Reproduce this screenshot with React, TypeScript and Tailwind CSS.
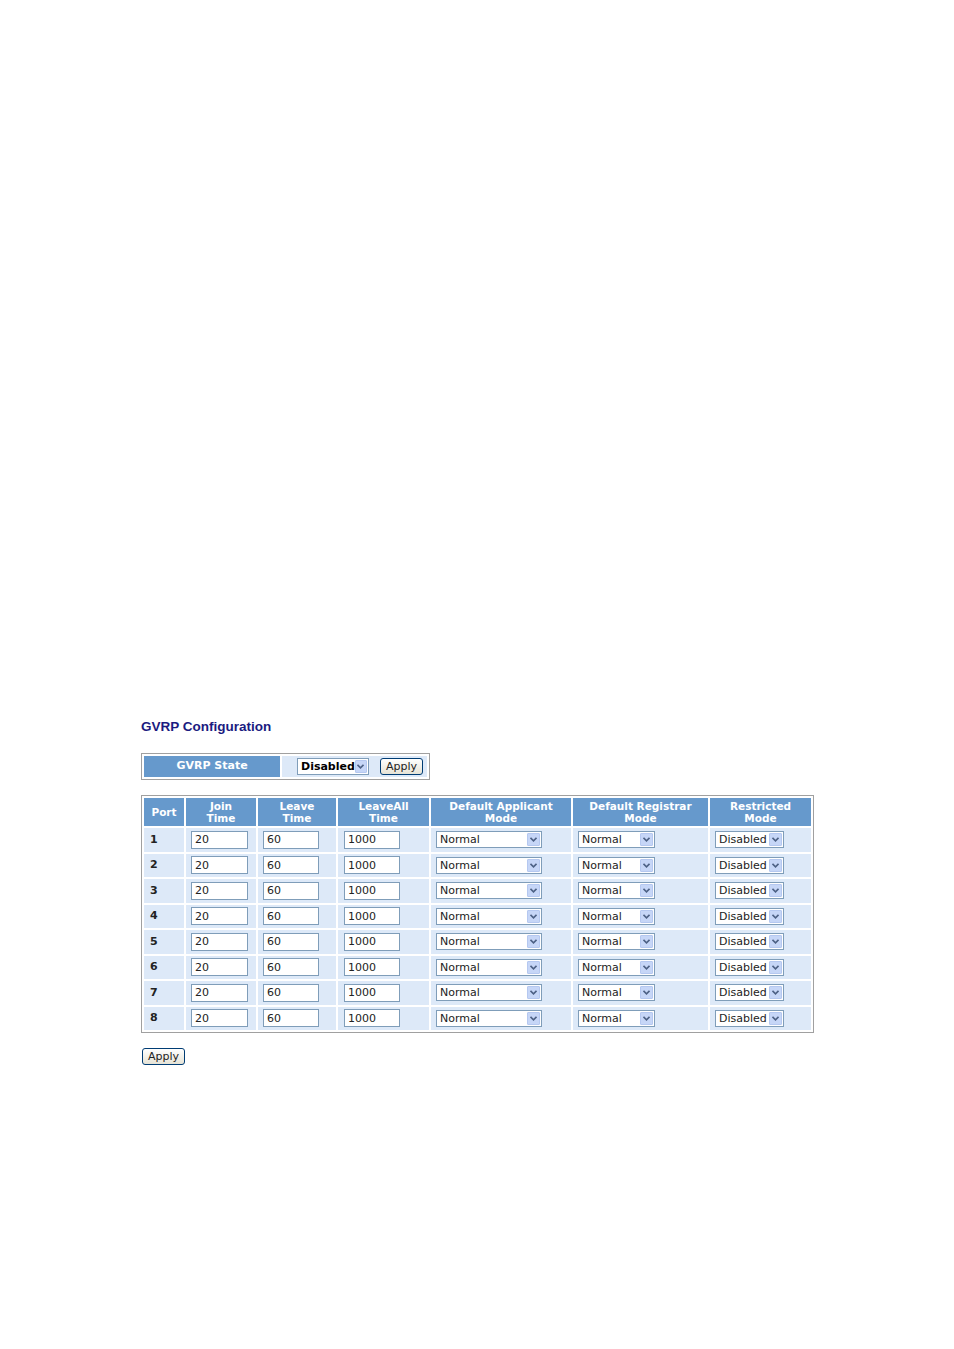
const rows = [1, 2, 3, 4, 5, 6, 7, 8];

const Chevron = () => (
  <svg width="7" height="5" viewBox="0 0 7 5" className="block">
    <path d="M0.5 0.8 L3.5 3.8 L6.5 0.8" fill="none" stroke="#4d6185" strokeWidth="1.6" />
  </svg>
);

function FakeSelect({ value, width, bold }: { value: string; width: string; bold?: boolean }) {
  return (
    <div
      className={`${width} flex h-[17px] items-center justify-between border border-[#7f9db9] bg-white pl-[3px] pr-px`}
    >
      <span className={`leading-none ${bold ? "text-[11px] font-bold text-black" : "text-[11px] text-[#222]"}`}>
        {value}
      </span>
      <span className="flex h-[13px] w-[13px] items-center justify-center rounded-[1px] border border-[#b5c8f0] bg-[#c6d6f7]">
        <Chevron />
      </span>
    </div>
  );
}

const TextBox = ({ value, width }: { value: string; width: string }) => (
  <div className={`${width} flex h-[18px] items-center border border-[#7f9db9] bg-white pl-[3px] text-[11px] leading-none text-[#222]`}>
    {value}
  </div>
);

const XpButton = ({ label }: { label: string }) => (
  <button className="flex h-[17px] items-center rounded-[3px] border border-[#003c74] bg-gradient-to-b from-white to-[#e6e3d6] px-[5px] text-[11px] leading-none text-[#222]">
    {label}
  </button>
);

const headers = [
  { w: "w-[40px]", lines: ["Port"] },
  { w: "w-[70px]", lines: ["Join", "Time"] },
  { w: "w-[78px]", lines: ["Leave", "Time"] },
  { w: "w-[91px]", lines: ["LeaveAll", "Time"] },
  { w: "w-[140px]", lines: ["Default Applicant", "Mode"] },
  { w: "w-[135px]", lines: ["Default Registrar", "Mode"] },
  { w: "w-[101px]", lines: ["Restricted", "Mode"] },
];

export default function App() {
  return (
    <div className="h-[1349px] w-[954px] bg-white pl-[141px] pt-[719px] font-['DejaVu_Sans',Verdana,sans-serif]">
      <h1 className="font-['Liberation_Sans',Arial,sans-serif] text-[13.5px] font-bold leading-[16px] text-[#1b1b80]">
        GVRP Configuration
      </h1>

      <table className="mt-[18px] border-separate border-spacing-[2px] border border-[#a0a0a0]">
        <tbody>
          <tr>
            <th className="h-[21px] w-[136px] bg-[#6699cc] text-[11px] font-bold text-white">GVRP State</th>
            <td className="w-[145px] bg-[#dde9f8] p-0">
              <div className="flex items-center gap-[11px] pl-[15px]">
                <FakeSelect value="Disabled" width="w-[72px]" bold />
                <XpButton label="Apply" />
              </div>
            </td>
          </tr>
        </tbody>
      </table>

      <table className="mt-[15px] table-fixed border-separate border-spacing-[2px] border border-[#a0a0a0]">
        <thead>
          <tr>
            {headers.map((h) => (
              <th key={h.lines[0]} className={`${h.w} h-[28px] bg-[#6699cc] p-0 text-[10.5px] font-bold leading-[12px] text-white`}>
                {h.lines.map((l) => (
                  <div key={l}>{l}</div>
                ))}
              </th>
            ))}
          </tr>
        </thead>
        <tbody>
          {rows.map((n) => (
            <tr key={n} className="h-[23.5px]">
              <td className="bg-[#dde9f8] pl-[6px] text-[11px] font-bold text-[#222]">{n}</td>
              <td className="bg-[#dde9f8] pl-[5px]">
                <TextBox value="20" width="w-[57px]" />
              </td>
              <td className="bg-[#dde9f8] pl-[5px]">
                <TextBox value="60" width="w-[56px]" />
              </td>
              <td className="bg-[#dde9f8] pl-[6px]">
                <TextBox value="1000" width="w-[56px]" />
              </td>
              <td className="bg-[#dde9f8] pl-[5px]">
                <FakeSelect value="Normal" width="w-[106px]" />
              </td>
              <td className="bg-[#dde9f8] pl-[5px]">
                <FakeSelect value="Normal" width="w-[77px]" />
              </td>
              <td className="bg-[#dde9f8] pl-[5px]">
                <FakeSelect value="Disabled" width="w-[69px]" />
              </td>
            </tr>
          ))}
        </tbody>
      </table>

      <div className="mt-[15px] pl-px">
        <XpButton label="Apply" />
      </div>
    </div>
  );
}
